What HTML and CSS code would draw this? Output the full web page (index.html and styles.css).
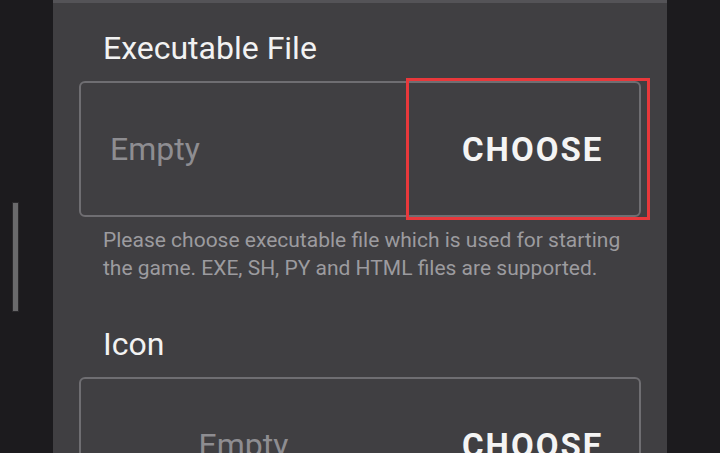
FILE: index.html
```html
<!DOCTYPE html>
<html lang="en">
<head>
  <meta charset="UTF-8" />
  <meta name="viewport" content="width=device-width, initial-scale=1.0" />
  <title>Add Non-Steam Game</title>
  <link rel="stylesheet" href="styles.css">
</head>
<body>
  <div class="app">
    <div class="rail rail-left">
      <div class="scrollbar"></div>
    </div>

    <main class="panel">
      <section class="field">
        <h2 class="field-label">Executable File</h2>
        <div class="picker">
          <span class="picker-value">Empty</span>
          <button class="picker-btn focused">CHOOSE</button>
        </div>
        <p class="hint">Please choose executable file which is used for starting the game. EXE, SH, PY and HTML files are supported.</p>
      </section>

      <section class="field">
        <h2 class="field-label">Icon</h2>
        <div class="picker">
          <span class="picker-value centered">Empty</span>
          <button class="picker-btn">CHOOSE</button>
        </div>
      </section>
    </main>

    <div class="rail rail-right"></div>
  </div>
</body>
</html>
```

FILE: styles.css
```css
html, body {
  margin: 0;
  padding: 0;
  height: 100%;
  overflow: hidden;
  font-family: Roboto, "Open Sans", sans-serif;
  background-color: #1c1b1e;
  color: #f0f0f0;
}
.app {
  display: flex;
  height: 100%;
}
.rail {
  width: 53px;
  flex-shrink: 0;
  background-color: #1c1b1e;
}
.rail-left {
  padding: 202px 0 0 12px;
  box-sizing: border-box;
}
.scrollbar {
  width: 7px;
  height: 110px;
  background-color: #6a6a6c;
  border: 1px solid #2a292c;
  box-sizing: border-box;
}
.panel {
  flex: 1;
  background-color: #403f42;
  border-top: 3px solid #545357;
  padding: 0 26px;
}
.field-label {
  margin: 0;
  padding-left: 24px;
  font-size: 32px;
  font-weight: normal;
  line-height: 40px;
  color: #f2f2f2;
}
.field:first-child .field-label {
  margin-top: 25px;
  margin-bottom: 13px;
}
.field + .field .field-label {
  margin-top: 42px;
  margin-bottom: 13px;
}
.picker {
  display: flex;
  height: 136px;
  border: 2px solid #6f6e72;
  border-radius: 6px;
  box-sizing: border-box;
}
.picker-value {
  flex: 1;
  display: flex;
  align-items: center;
  padding-left: 29px;
  font-size: 32px;
  color: #8e8d91;
}
.picker-value.centered {
  justify-content: center;
  padding-left: 0;
}
.picker-btn {
  width: 244px;
  padding: 0 0 0 53px;
  text-align: left;
  background: transparent;
  border: 3px solid transparent;
  margin: -5px -11px -5px 0;
  font-family: inherit;
  font-size: 33px;
  font-weight: bold;
  letter-spacing: 2px;
  color: #f4f4f4;
}
.picker-btn.focused {
  border-color: #e8383b;
}
.hint {
  margin: 9px 0 0;
  padding: 0 20px 0 24px;
  font-size: 21px;
  line-height: 28px;
  color: #9c9b9f;
}
```
